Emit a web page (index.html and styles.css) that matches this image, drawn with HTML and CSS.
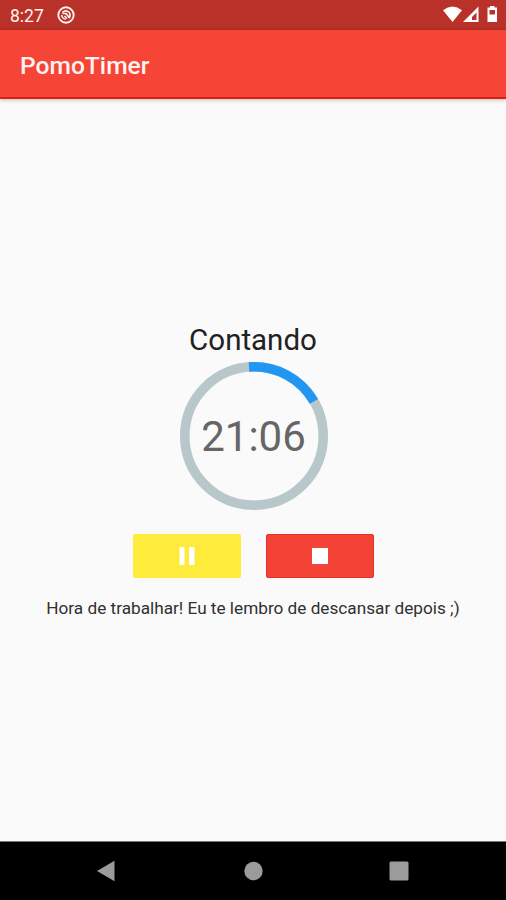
FILE: index.html
```html
<!DOCTYPE html>
<html lang="pt-BR">
<head>
<meta charset="utf-8">
<title>PomoTimer</title>
<link rel="stylesheet" href="styles.css">
</head>
<body>
<div class="statusbar">
  <span class="clock">8:27</span>
  <svg class="notice" width="18" height="18" viewBox="0 0 18 18" fill="none" stroke="#fff4f2"><circle cx="9" cy="9" r="7.7" stroke-width="1.9"/><path d="M5.300 6.500Q9 3.200 12.300 6.500Q14 9 12.300 11.500M4.600 9Q5 12.500 8.800 13.300" stroke-width="1.5"/><path d="M5.500 7.500H9L12.800 12.300M7.500 10L10 12.500" stroke-width="1.6"/></svg>
  <svg class="signals" width="56" height="18" viewBox="0 0 56 18"><path d="M1 4.200Q10.500-3.200 20 4.200L10.500 16Z" fill="#fff"/><path d="M36.500 .5V16H21Z" fill="#fff"/><path d="M34.500 6.500V14H30V11Z" fill="#b93128"/><path d="M48 1.500V0H52.500V1.500H55V16H45.500V1.500Z" fill="#fff"/><path d="M47.500 4H53V8.500H47.500Z" fill="#b93128"/></svg>
</div>
<header class="appbar"><h1 class="title">PomoTimer</h1></header>
<main class="content">
  <h2 class="state">Contando</h2>
  <div class="dial">
    <svg class="ring" width="148" height="148" viewBox="-74 -74 148 148" fill="none" stroke-width="9.600"><circle r="69.200" stroke="#b8c7ca"/><path d="M-5 -69A69.200 69.200 0 0 1 59.900 -34.600" stroke="#2196f3"/></svg>
    <span class="time">21:06</span>
  </div>
  <div class="actions">
    <button class="btn pause" aria-label="Pausar"><svg width="16" height="18" viewBox="0 0 16 18"><path d="M.5 0H5.500V18H.5ZM10 0H15.500V18H10Z" fill="#fff"/></svg></button>
    <button class="btn stop" aria-label="Parar"><svg width="16" height="16" viewBox="0 0 16 16"><path d="M0 0H16V16H0Z" fill="#fff"/></svg></button>
  </div>
  <p class="hint">Hora de trabalhar! Eu te lembro de descansar depois ;)</p>
</main>
<nav class="navbar">
  <svg width="20" height="22" viewBox="0 0 20 22"><path d="M1 11L18.500 .8V21.200Z" fill="#9b9b9b"/></svg>
  <svg width="20" height="20" viewBox="0 0 20 20"><circle cx="10.500" cy="10" r="9.200" fill="#9b9b9b"/></svg>
  <svg width="20" height="20" viewBox="0 0 20 20"><rect x=".5" y=".5" width="19" height="19" rx="1.500" fill="#9b9b9b"/></svg>
</nav>
</body>
</html>
```
FILE: styles.css
```css
* { box-sizing: border-box; }
body {
  margin: 0;
  height: 900px;
  display: flex;
  flex-direction: column;
  overflow: hidden;
  background: #fafafa;
  font-family: Roboto, sans-serif;
}
.statusbar {
  height: 30px;
  display: flex;
  align-items: center;
  padding: 0 8px 0 10px;
  background: #b93128;
  color: #fff4f2;
}
.clock { width: 47px; padding-top: 1px; font-size: 17.5px; line-height: 20px; }
.signals { margin-left: auto; }
.appbar {
  height: 69px;
  display: flex;
  align-items: center;
  padding: 4px 20px 0;
  background: #f64436;
  border-bottom: 2px solid #e01d14;
  box-shadow: 0 1px 4px rgba(0, 0, 0, .25);
}
.title {
  margin: 0;
  color: #fff4f2;
  font-size: 24.6px;
  font-weight: 500;
  line-height: 32px;
}
.content {
  flex: 1;
  display: flex;
  flex-direction: column;
  align-items: center;
  padding-top: 222px;
}
.state {
  margin: 0;
  height: 41px;
  color: #212121;
  font-size: 29.500px;
  font-weight: 400;
  line-height: 38px;
  letter-spacing: 0;
}
.dial {
  display: grid;
  place-items: center;
  width: 148px;
  height: 148px;
  margin-left: 1px;
}
.ring, .time { grid-area: 1 / 1; }
.time { padding-top: 2px; color: #666; font-size: 42px; line-height: 50px; }
.actions { display: flex; gap: 25px; margin-top: 24px; margin-left: 1px; }
.btn {
  width: 108px;
  height: 44px;
  display: flex;
  align-items: center;
  justify-content: center;
  padding: 0;
  border: 0;
  border-radius: 2px;
}
.pause { background: #ffeb3b; }
.stop { background: #f44336; border: 1px solid #e53027; }
.hint {
  margin: 20px 0 0;
  color: #303030;
  font-size: 17.2px;
  line-height: 20px;
  white-space: nowrap;
}
.navbar {
  height: 59px;
  display: flex;
  align-items: center;
  justify-content: space-between;
  padding: 0 97px 0 96px;
  border-top: 1px solid #777;
  background: #000;
}
```
